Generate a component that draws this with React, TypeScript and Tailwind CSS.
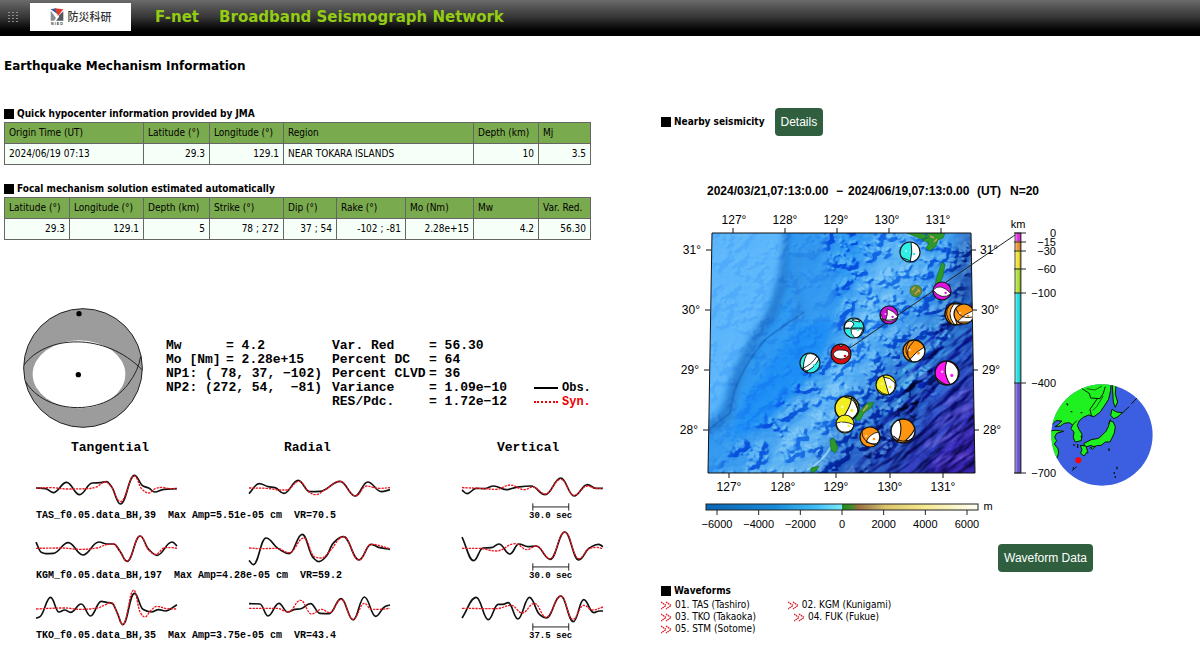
import React from 'react';

type Point = [number, number];

interface Trace {
  obs: Point[];
  syn: Point[];
}

interface Station {
  caption: string;
  span: string;
  traces: Trace[];
}

// Each trace runs over 424 units, three units to a pixel.
const stations: Station[] = [
  {
    caption: 'TAS_f0.05.data_BH,39  Max Amp=5.51e-05 cm  VR=70.5',
    span: '30.0 sec',
    traces: [
      {
        obs: [[0, 86], [29, 88], [52, 100], [92, 69], [131, 106], [169, 71], [194, 70], [212, 67], [226, 80], [254, 134], [296, 48], [322, 80], [339, 86], [357, 98], [384, 90], [424, 88]],
        syn: [[0, 87], [44, 85], [94, 89], [154, 88], [179, 84], [209, 68], [226, 82], [254, 127], [296, 50], [319, 90], [339, 101], [359, 88], [379, 84], [404, 88], [424, 88]],
      },
      {
        obs: [[0, 103], [31, 73], [58, 82], [78, 85], [105, 102], [148, 63], [183, 97], [213, 96], [274, 66], [319, 110], [357, 68], [398, 97], [424, 91]],
        syn: [[0, 86], [53, 87], [93, 92], [113, 92], [150, 66], [183, 100], [200, 106], [228, 92], [274, 66], [321, 110], [353, 80], [373, 84], [393, 87], [424, 85]],
      },
      {
        obs: [[0, 92], [15, 103], [43, 87], [68, 88], [95, 80], [133, 91], [163, 84], [208, 80], [250, 106], [297, 56], [337, 110], [377, 76], [403, 87], [424, 87]],
        syn: [[0, 85], [53, 87], [103, 90], [145, 77], [188, 91], [213, 83], [250, 104], [297, 60], [337, 108], [377, 80], [403, 87], [424, 87]],
      },
    ],
  },
  {
    caption: 'KGM_f0.05.data_BH,197  Max Amp=4.28e-05 cm  VR=59.2',
    span: '30.0 sec',
    traces: [
      {
        obs: [[0, 68], [16, 99], [29, 103], [52, 102], [97, 70], [141, 107], [189, 68], [214, 74], [234, 74], [252, 95], [274, 126], [313, 50], [339, 90], [364, 108], [409, 68], [424, 80]],
        syn: [[0, 87], [74, 86], [134, 90], [184, 86], [212, 76], [232, 74], [252, 95], [274, 125], [313, 50], [339, 92], [359, 105], [389, 85], [409, 85], [424, 87]],
      },
      {
        obs: [[0, 123], [13, 136], [51, 56], [88, 88], [121, 103], [160, 45], [193, 115], [210, 127], [233, 110], [253, 72], [284, 52], [331, 122], [367, 75], [393, 85], [424, 90]],
        syn: [[0, 86], [33, 88], [83, 87], [121, 100], [165, 56], [198, 113], [218, 116], [243, 95], [284, 52], [331, 122], [367, 75], [424, 88]],
      },
      {
        obs: [[0, 53], [35, 124], [63, 86], [88, 85], [111, 74], [144, 104], [171, 74], [198, 82], [223, 80], [265, 120], [309, 38], [351, 122], [383, 86], [410, 75], [424, 82]],
        syn: [[0, 87], [48, 87], [103, 95], [160, 73], [196, 91], [223, 80], [265, 118], [309, 38], [351, 118], [383, 88], [403, 84], [424, 88]],
      },
    ],
  },
  {
    caption: 'TKO_f0.05.data_BH,35  Max Amp=3.75e-05 cm  VR=43.4',
    span: '37.5 sec',
    traces: [
      {
        obs: [[0, 117], [12, 112], [44, 54], [69, 98], [86, 92], [104, 99], [136, 74], [164, 110], [196, 66], [212, 69], [229, 72], [244, 100], [261, 136], [296, 42], [322, 90], [347, 98], [369, 91], [389, 95], [424, 76]],
        syn: [[0, 89], [84, 86], [134, 90], [184, 86], [209, 76], [226, 70], [242, 95], [261, 136], [294, 32], [314, 100], [328, 113], [344, 95], [364, 81], [394, 88], [424, 89]],
      },
      {
        obs: [[0, 73], [33, 74], [57, 110], [90, 72], [116, 98], [138, 90], [153, 89], [185, 73], [213, 102], [241, 103], [277, 58], [313, 122], [347, 53], [381, 111], [408, 82], [424, 77]],
        syn: [[0, 87], [83, 87], [118, 98], [155, 63], [188, 104], [218, 90], [243, 100], [277, 60], [313, 120], [347, 72], [368, 90], [388, 90], [424, 87]],
      },
      {
        obs: [[0, 116], [43, 54], [79, 121], [109, 75], [123, 75], [139, 70], [168, 119], [203, 54], [233, 105], [253, 116], [297, 50], [335, 127], [366, 61], [396, 100], [413, 95], [424, 95]],
        syn: [[0, 87], [103, 88], [148, 78], [181, 101], [218, 72], [253, 114], [297, 50], [333, 120], [366, 78], [393, 92], [424, 83]],
      },
    ],
  },
];

// Monotone cubic through the samples, so peaks stay where they are
const smoothPath = (pts: Point[]) => {
  const secants = pts.slice(1).map((p, i) => (p[1] - pts[i][1]) / (p[0] - pts[i][0]));
  const slopes = pts.map((_, i) => {
    if (i === 0) return secants[0];
    if (i === pts.length - 1) return secants[i - 1];
    const a = secants[i - 1];
    const b = secants[i];
    return a * b <= 0 ? 0 : (2 * a * b) / (a + b);
  });
  let d = `M${pts[0][0]} ${pts[0][1]}`;
  for (let i = 1; i < pts.length; i++) {
    const [x0, y0] = pts[i - 1];
    const [x1, y1] = pts[i];
    // long handles keep the crests round
    const h = (x1 - x0) * 0.42;
    d += `C${x0 + h} ${y0 + slopes[i - 1] * h} ${x1 - h} ${y1 - slopes[i] * h} ${x1} ${y1}`;
  }
  return d;
};

const Header: React.FC = () => (
  <header className="h-9 flex items-center bg-gradient-to-b from-[#6b6b6b] via-[#333333] to-black">
    <svg className="w-3 h-4 ml-2 shrink-0" viewBox="0 0 12 16" fill="#8c8c8c">
      {[2, 5, 8, 11].map((y) =>
        [0, 4, 8].map((x) => <rect key={`${x}-${y}`} x={x} y={y} width="2" height="1" />)
      )}
    </svg>
    <a href="#nied" className="ml-[10px] -mt-[2px] w-[101px] h-7 bg-white flex items-center justify-center gap-1 shrink-0">
      <svg className="w-[14px] h-[18px]" viewBox="0 0 42 54">
        <path d="M2 4 L18 1 L22 18 Z" fill="#2a5fa8" />
        <path d="M14 1 L40 4 L24 24 Z" fill="#e2382c" />
        <path d="M2 8 L18 30 L12 38 L2 38 Z" fill="#8a8f94" />
        <path d="M40 10 L40 38 L18 38 Q30 26 27 22 Z" fill="#55595d" />
        <text x="21" y="52" textAnchor="middle" fontSize="11" fontWeight="bold" fill="#333" className="font-['Liberation_Sans',sans-serif]">N I E D</text>
      </svg>
      <span className="font-['Liberation_Sans','Noto_Sans_CJK_JP',sans-serif] text-[11px] leading-4 font-medium text-[#333333] whitespace-nowrap">防災科研</span>
    </a>
    <h1 className="ml-6 -mt-[2px] flex gap-5 font-['DejaVu_Sans',sans-serif] text-[15px] leading-6 font-bold text-[#93cc12] whitespace-nowrap">
      <span>F-net</span>
      <span>Broadband Seismograph Network</span>
    </h1>
  </header>
);

const SectionTitle: React.FC<{ children: React.ReactNode }> = ({ children }) => (
  <h3 className="flex items-center gap-[3px] text-[10px] leading-4 font-bold whitespace-nowrap">
    <span className="w-[10px] h-[10px] bg-black" />
    {children}
  </h3>
);

interface Column {
  label: string;
  value: string;
  width: string;
  left?: boolean;
}

const hypocenter: Column[] = [
  { label: 'Origin Time (UT)', value: '2024/06/19 07:13', width: 'w-[139px]', left: true },
  { label: 'Latitude (°)', value: '29.3', width: 'w-[66px]' },
  { label: 'Longitude (°)', value: '129.1', width: 'w-[74px]' },
  { label: 'Region', value: 'NEAR TOKARA ISLANDS', width: 'w-[190px]', left: true },
  { label: 'Depth (km)', value: '10', width: 'w-[65px]' },
  { label: 'Mj', value: '3.5', width: 'w-[52px]' },
];

const mechanism: Column[] = [
  { label: 'Latitude (°)', value: '29.3', width: 'w-[65px]' },
  { label: 'Longitude (°)', value: '129.1', width: 'w-[74px]' },
  { label: 'Depth (km)', value: '5', width: 'w-[66px]' },
  { label: 'Strike (°)', value: '78 ; 272', width: 'w-[74px]' },
  { label: 'Dip (°)', value: '37 ; 54', width: 'w-[53px]' },
  { label: 'Rake (°)', value: '-102 ; -81', width: 'w-[69px]' },
  { label: 'Mo (Nm)', value: '2.28e+15', width: 'w-[68px]' },
  { label: 'Mw', value: '4.2', width: 'w-[65px]' },
  { label: 'Var. Red.', value: '56.30', width: 'w-[52px]' },
];

const DataTable: React.FC<{ columns: Column[] }> = ({ columns }) => (
  <table className="w-[587px] table-fixed border-collapse text-[10px] leading-4 whitespace-nowrap">
    <thead>
      <tr className="h-[21px] bg-[#7aaa4e]">
        {columns.map((c) => (
          <th key={c.label} className={`${c.width} border border-[#666666] px-1 font-normal text-left`}>{c.label}</th>
        ))}
      </tr>
    </thead>
    <tbody>
      <tr className="h-[21px] bg-[#f7fff9]">
        {columns.map((c) => (
          <td key={c.label} className={`border border-[#666666] px-1 ${c.left ? 'text-left' : 'text-right'}`}>{c.value}</td>
        ))}
      </tr>
    </tbody>
  </table>
);

const FocalSphere: React.FC = () => (
  <svg className="w-[122px] h-[122px] shrink-0" viewBox="0 0 366 366" fill="none" stroke="#222" strokeWidth="3">
    <circle cx="183" cy="183" r="178" fill="#9c9c9c" />
    <ellipse cx="171" cy="202" rx="139" ry="102" fill="#fff" stroke="none" />
    <path d="M6 174 C72 84 248 74 361 189" />
    <path d="M11 224 C66 318 240 334 318 232 Q350 190 356 148" />
    <circle cx="171" cy="20" r="8" fill="#000" stroke="none" />
    <circle cx="169" cy="203" r="8" fill="#000" stroke="none" />
  </svg>
);

const Solution: React.FC = () => (
  <div className="flex items-start ml-[22px]">
    <FocalSphere />
    <div className="flex items-start mt-8 ml-[22px] font-['Liberation_Mono',monospace] font-bold text-[13px] leading-[14px] whitespace-pre">
      <div className="w-[166px]">
        <div className="grid grid-cols-[60px_1fr]">
          <span>Mw</span>
          <span>= 4.2</span>
          <span>Mo [Nm]</span>
          <span>= 2.28e+15</span>
        </div>
        <p>{'NP1: ( 78, 37, −102)'}</p>
        <p>{'NP2: (272, 54,  −81)'}</p>
      </div>
      <div className="grid grid-cols-[97px_1fr] w-[202px]">
        <span>Var. Red</span>
        <span>= 56.30</span>
        <span>Percent DC</span>
        <span>= 64</span>
        <span>Percent CLVD</span>
        <span>= 36</span>
        <span>Variance</span>
        <span>= 1.09e−10</span>
        <span>RES/Pdc.</span>
        <span>= 1.72e−12</span>
      </div>
      <ul className="self-end text-[12px]">
        <li className="flex items-center gap-1">
          <span className="w-6 border-t-2 border-black" />
          Obs.
        </li>
        <li className="flex items-center gap-1 text-[#f00000]">
          <span className="w-6 border-t-2 border-dotted border-[#f00000]" />
          Syn.
        </li>
      </ul>
    </div>
  </div>
);

const TracePlot: React.FC<{ trace: Trace; scale?: boolean }> = ({ trace, scale }) => (
  <svg className="w-[141px] h-12 overflow-visible" viewBox="0 8 424 144" fill="none">
    <path d={smoothPath(trace.obs)} stroke="#111" strokeWidth="5" />
    <path d={smoothPath(trace.syn)} stroke="#f0141e" strokeWidth="4" strokeDasharray="7 3" />
    {scale && <path d="M213 143H321M213 132V154M321 132V154" stroke="#222" strokeWidth="3" />}
  </svg>
);

const WaveformFit: React.FC = () => (
  <div className="ml-9 max-w-[567px] font-['Liberation_Mono',monospace] font-bold text-[10px] leading-3 whitespace-pre">
    <div className="grid grid-cols-[1fr_1fr_141px] text-[13px] leading-4">
      <span className="pl-[35px]">Tangential</span>
      <span className="pl-[35px]">Radial</span>
      <span className="pl-[35px]">Vertical</span>
    </div>
    <div className="mt-[6px]">
      {stations.map((s) => (
        <div key={s.caption} className="grid grid-cols-[1fr_1fr_141px]">
          {s.traces.map((t, i) => (
            <TracePlot key={i} trace={t} scale={i === 2} />
          ))}
          <p className="col-span-2">{s.caption}</p>
          <p className="pl-[67px] text-[9px]">{s.span}</p>
        </div>
      ))}
    </div>
  </div>
);

interface Event {
  x: number;
  y: number;
  r: number;
  color: string;
  white: string;
  line?: string;
}

// Shapes are drawn in a circle of radius 10
const events: Event[] = [
  { x: 910, y: 252, r: 10, color: '#2ff0e8', white: 'M1 -11 Q3 0 0 11 L12 11 L12 -11Z', line: 'M-9 5 Q0 9 3 10' },
  { x: 942, y: 291, r: 9, color: '#e010e0', white: 'M-10 -1 Q-2 -10 10 3 Q0 11 -10 -1Z' },
  { x: 889, y: 315, r: 9, color: '#d010d8', white: 'M-9 -1 Q-6 8 -5 8 L-10 4Z M-2 -7 Q6 -4 10 2 Q4 9 -4 6 Q-1 0 -2 -7Z', line: 'M-9 4 Q0 8 9 3' },
  { x: 956, y: 314, r: 11, color: '#ff9410', white: 'M-2 -9 Q-9 0 -2 9 L1 10 Q-3 0 4 -9Z', line: 'M-6 -8 Q-12 0 -4 9' },
  { x: 964, y: 314, r: 10, color: '#ff9410', white: 'M-7 8 Q0 0 10 -4 L11 8Z', line: 'M-8 -5 Q-4 6 9 3' },
  { x: 914, y: 351, r: 11, color: '#ff9410', white: 'M-5 9 Q2 0 10 -4 L12 12 L-5 12Z', line: 'M-5 -8 Q-11 1 -2 9 M0 -9 Q-10 0 -3 9' },
  { x: 947, y: 373, r: 12, color: '#ff18f0', white: 'M0 -10 Q-4 0 3 10 Q11 6 9 -3 Q6 -9 0 -10Z M-9 4 Q-4 9 1 10 L-9 9Z' },
  { x: 886, y: 385, r: 10, color: '#f2ee20', white: 'M-3 -11 Q0 0 3 10 Q10 6 9 -2 Q4 -8 -3 -8Z', line: 'M-9 4 Q-3 10 3 10' },
  { x: 903, y: 431, r: 12, color: '#ff9410', white: 'M-3 -9 Q0 0 -4 8 L-12 6 L-12 -8Z M2 8 Q9 2 10 -3 L12 10Z', line: 'M-8 4 Q0 12 8 6' },
  { x: 870, y: 437, r: 10, color: '#ff9410', white: 'M-4 5 Q0 -4 9 -5 Q12 8 2 7Z', line: 'M-8 -6 Q-9 5 6 8' },
  { x: 847, y: 408, r: 12, color: '#f2ee20', white: 'M-5 10 Q3 0 4 -9 Q9 -4 9 3 Q5 12 -5 10Z', line: 'M-2 -9 Q6 -9 9 1' },
  { x: 845, y: 424, r: 9, color: '#f2ee20', white: 'M-10 -1 Q0 -4 10 1 Q8 9 0 9 Q-8 9 -10 -1Z' },
  { x: 854, y: 328, r: 10, color: '#2ff0e8', white: 'M-9 -4 Q-4 -10 0 -4 L-3 0 L-10 1Z M-3 1 L9 1 Q6 10 1 10 Q-4 6 -3 1Z M-2 -8 Q4 -11 6 -6 L0 -7Z', line: 'M-10 0 H10' },
  { x: 810, y: 363, r: 10, color: '#2ff0e8', white: 'M-6 9 Q4 6 9 -4 Q4 -11 -3 -9 Q-8 0 -6 9Z', line: 'M-9 6 Q2 2 7 -7 M-8 5 L-2 9' },
  { x: 841, y: 354, r: 10, color: '#d80c10', white: 'M-8 0 Q-5 -5 1 -4 Q8 -4 8 1 Q4 6 0 5 Q-6 5 -8 0Z M-2 -9 L2 -9 L0 -7Z' },
];

const Terrain: React.FC = () => (
  <>
    <defs>
      <clipPath id="map-frame">
        <path d="M712 233H971L975 473H708Z" />
      </clipPath>
      <linearGradient id="sea" gradientUnits="userSpaceOnUse" x1="800" y1="300" x2="965" y2="445">
        <stop offset="0" stopColor="#2b97f2" />
        <stop offset="0.42" stopColor="#439fee" />
        <stop offset="0.6" stopColor="#2a74d2" />
        <stop offset="0.76" stopColor="#2346b4" />
        <stop offset="1" stopColor="#2c1c98" />
      </linearGradient>
      <filter id="soft" x="-20%" y="-20%" width="140%" height="140%">
        <feGaussianBlur stdDeviation="3" />
      </filter>
      <filter id="softer" x="-30%" y="-30%" width="160%" height="160%">
        <feGaussianBlur stdDeviation="8" />
      </filter>
      <filter id="seamounts" x="0" y="0" width="100%" height="100%" colorInterpolationFilters="sRGB">
        <feTurbulence type="fractalNoise" baseFrequency="0.06 0.07" numOctaves="3" seed="7" />
        <feColorMatrix values="0 0 0 0 0  0 0 0 0 0  0 0 0 0 0  1 0 0 0 0" />
        <feComponentTransfer>
          <feFuncA type="table" tableValues="0 0.01 0.02 0.04 0.06 0.09 0.4 0.7 0.8 0.9 1" />
        </feComponentTransfer>
        <feDiffuseLighting surfaceScale="7" diffuseConstant="0.77" lightingColor="#fff">
          <feDistantLight azimuth="225" elevation="42" />
        </feDiffuseLighting>
      </filter>
      <filter id="ridges" x="0" y="0" width="100%" height="100%" colorInterpolationFilters="sRGB">
        <feTurbulence type="fractalNoise" baseFrequency="0.025 0.085" numOctaves="3" seed="12" />
        <feColorMatrix values="0 0 0 0 0  0 0 0 0 0  0 0 0 0 0  1 0 0 0 0" />
        <feDiffuseLighting surfaceScale="8" diffuseConstant="0.8" lightingColor="#fff">
          <feDistantLight azimuth="235" elevation="42" />
        </feDiffuseLighting>
      </filter>
      <mask id="arc-mask" maskUnits="userSpaceOnUse" x="700" y="225" width="285" height="255">
        <path d="M820 225L985 225L930 400L870 480L715 480L730 450L765 420L795 385L835 345L838 300Z" fill="#fff" filter="url(#soft)" />
      </mask>
      <mask id="trench-mask" maskUnits="userSpaceOnUse" x="700" y="225" width="285" height="255">
        <path d="M985 290L940 320L900 370L860 480L985 480Z" fill="#fff" filter="url(#softer)" />
      </mask>
    </defs>
    <g clipPath="url(#map-frame)" className="isolate">
      <rect x="700" y="225" width="285" height="255" fill="url(#sea)" />
      <path d="M880 225L935 225L925 270L880 330L850 400L810 480L750 480L820 390L860 290Z" fill="#68bcf6" opacity="0.75" filter="url(#softer)" />
      <path d="M962 225L985 225L985 330L945 340L952 290Z" fill="#1c4ca8" opacity="0.7" filter="url(#softer)" />
      <path d="M800 325L835 320L815 370L765 425L730 440L745 395Z" fill="#1a8ef5" filter="url(#soft)" />
      <path d="M795 225L840 225L830 310L800 325L785 300Z" fill="#3298f0" filter="url(#soft)" />
      <path d="M782 230Q786 270 772 312Q744 348 732 390L727 414L705 432" stroke="#2680d6" strokeWidth="12" fill="none" filter="url(#soft)" />
      <path d="M700 225H784Q783 270 766 312Q740 348 727 388Q722 412 700 430Z" fill="#5cb6fb" filter="url(#soft)" />
      <path d="M804 312Q780 328 766 339Q745 362 734 392L730 413L708 430" stroke="#1a64b8" strokeWidth="2" fill="none" opacity="0.6" />
      <path d="M800 250Q793 290 802 315M790 270Q780 300 774 322M820 245L808 262M803 312L792 322" stroke="#2676c4" strokeWidth="3" fill="none" opacity="0.5" filter="url(#soft)" />
      <path d="M877 480L915 385M890 480L925 405M860 480L880 445M915 480L945 430" stroke="#123c98" strokeWidth="7" fill="none" opacity="0.5" filter="url(#soft)" />
      <path d="M925 445L970 430M930 462L972 455M935 425L972 405M945 405L970 390" stroke="#7a5be0" strokeWidth="4" fill="none" opacity="0.7" filter="url(#soft)" />
      <rect x="700" y="225" width="285" height="255" filter="url(#seamounts)" className="mix-blend-soft-light" opacity="0.2" />
      <g mask="url(#arc-mask)" className="mix-blend-soft-light">
        <rect x="700" y="225" width="285" height="255" filter="url(#seamounts)" />
      </g>
      <g mask="url(#trench-mask)" className="mix-blend-overlay" opacity="0.8">
        <rect x="600" y="120" width="500" height="500" filter="url(#ridges)" transform="rotate(-38 840 350)" />
      </g>
      <path d="M807 470Q822 462 831 447" stroke="#9adcf8" strokeWidth="2" fill="none" opacity="0.8" />
      <g fill="#2c9a2a" stroke="#176018" strokeWidth="0.5">
        <path d="M907 233L922 233L929 237L921 239L914 236Z" />
        <path d="M926 233L945 233L943 238L938 240L936 246L930 251L926 248L929 243L922 240L930 237Z" />
        <path d="M942 262L945 265L943 276L939 286L935 285L937 276Z" />
        <path d="M867 403L874 402L871 408L864 413L860 420L855 420L858 413Z" />
        <path d="M830 440L834 438L838 448L835 453L831 450Z" />
        <path d="M811 468L819 466L816 471L811 473Z" />
        <circle cx="916" cy="291" r="6" fill="#5d8a32" />
      </g>
      <path d="M912 290l3-3M915 294l4-4M918 289l2 3M930 236l4 2M934 242l3-3M868 405l-5 6" stroke="#d89a58" strokeWidth="1.4" />
    </g>
    <path d="M712 233H971L975 473H708Z" fill="none" stroke="#111" strokeWidth="1" />
  </>
);

const depths = [
  { y: 233, h: 8, color: '#e818e8' },
  { y: 241, h: 9, color: '#f08c20' },
  { y: 250, h: 18, color: '#f0e020' },
  { y: 268, h: 25, color: '#a8e020' },
  { y: 293, h: 90, color: '#10e0e0' },
  { y: 383, h: 90, color: '#5f45d8' },
];

const depthLabels = [
  { y: 233, text: '0' },
  { y: 242, text: '−15' },
  { y: 251, text: '−30' },
  { y: 269, text: '−60' },
  { y: 293, text: '−100' },
  { y: 383, text: '−400' },
  { y: 473, text: '−700' },
];

const Globe: React.FC = () => (
  <g transform="translate(690 370) scale(0.3333)">
    <clipPath id="globe">
      <circle cx="1236" cy="195" r="152" />
    </clipPath>
    <g clipPath="url(#globe)" strokeLinejoin="round">
      <rect x="1080" y="40" width="312" height="312" fill="#3b5fe0" />
      <g fill="#1ff01f" stroke="#061806" strokeWidth="3">
        <path d="M1075 175L1088 162L1098 152L1116 153L1106 163L1095 170L1112 168L1122 160L1138 158L1148 165L1143 176L1152 186L1150 203L1156 216L1174 212L1176 192L1167 178L1162 166L1168 152L1180 142L1196 135L1212 140L1230 127L1245 105L1256 88L1262 62L1264 30L1120 30L1070 110Z" />
        <path d="M1075 183L1098 181L1121 184L1100 190L1094 202L1100 212L1093 222L1104 236L1106 250L1100 266L1080 280Z" />
        <path d="M1267 44L1278 46L1276 72L1283 96L1276 112L1270 96Z" />
        <path d="M1266 118L1280 126L1297 128L1284 140L1272 146L1262 136Z" />
        <path d="M1260 152L1270 156L1276 170L1273 190L1265 206L1260 216L1246 216L1234 226L1220 227L1212 232L1204 226L1184 232L1182 220L1204 209L1226 205L1236 196L1248 184L1256 168Z" />
        <path d="M1200 233L1216 228L1208 238Z" />
        <path d="M1171 226L1188 228L1193 244L1182 258L1172 250L1176 238Z" />
      </g>
      <path d="M1175 55L1198 70L1202 84L1230 86L1240 70L1246 50M1205 140L1200 118L1222 86M1148 165L1160 152M1297 130L1308 118L1318 110M1324 102L1341 84M1160 290L1146 302M1256 162L1262 148" fill="none" stroke="#061806" strokeWidth="3" />
      <path d="M1190 56L1215 60L1236 48M1240 78L1220 110L1208 122" fill="none" stroke="#061806" strokeWidth="2" />
      <path d="M1130 100l4 6M1142 125h5M1172 128h5M1257 235v8M1281 290v8M1273 306v6M1276 318v6M1163 222v12M1172 200h5M1152 222v6M1192 248h3M1148 294h4" fill="none" stroke="#061806" strokeWidth="4" />
      <circle cx="1165" cy="271" r="9" fill="#f00" />
    </g>
  </g>
);

const SeismicityMap: React.FC = () => (
  <svg
    className="w-[480px] h-[355px] font-['Liberation_Sans',sans-serif]"
    viewBox="675 180 480 355"
    fontSize="12"
    role="img"
    aria-label="Nearby seismicity map"
  >
    <defs>
      <linearGradient id="round">
        <stop offset="0" stopColor="#fff" stopOpacity="0.6" />
        <stop offset="0.5" stopColor="#fff" stopOpacity="0" />
        <stop offset="1" stopColor="#000" stopOpacity="0.6" />
      </linearGradient>
      <linearGradient id="height">
        <stop offset="0" stopColor="#0a66b4" />
        <stop offset="0.25" stopColor="#1688d8" />
        <stop offset="0.4" stopColor="#3cbcf4" />
        <stop offset="0.5" stopColor="#7ce8fc" />
        <stop offset="0.5" stopColor="#1c8c1c" />
        <stop offset="0.54" stopColor="#4c8a30" />
        <stop offset="0.56" stopColor="#a07040" />
        <stop offset="0.62" stopColor="#b8a060" />
        <stop offset="0.66" stopColor="#dcc468" />
        <stop offset="0.8" stopColor="#f4e890" />
        <stop offset="1" stopColor="#fffff4" />
      </linearGradient>
    </defs>

    <g fontWeight="bold">
      <text x="707" y="195">2024/03/21,07:13:0.00</text>
      <text x="836" y="195">−</text>
      <text x="848" y="195">2024/06/19,07:13:0.00</text>
      <text x="977" y="195">(UT)</text>
      <text x="1039" y="195" textAnchor="end">N=20</text>
    </g>

    <Terrain />

    <g textAnchor="middle">
      {[127, 128, 129, 130, 131].map((lon, i) => (
        <React.Fragment key={lon}>
          <text x={734 + i * 51} y="224">{lon}°</text>
          <text x={729 + Math.round(i * 53.5)} y="491">{lon}°</text>
          <path d={`M${733 + i * 52} 233v-5M${729 + Math.round(i * 53.5)} 473v5`} stroke="#111" />
        </React.Fragment>
      ))}
    </g>
    {[31, 30, 29, 28].map((lat, i) => (
      <React.Fragment key={lat}>
        <path d={`M${711 - i} ${250 + i * 60}h-5M${971 + i} ${250 + i * 60}h5`} stroke="#111" />
        <text x={701 - i} y={254 + i * 60} textAnchor="end">{lat}°</text>
        <text x={980 + i} y={254 + i * 60}>{lat}°</text>
      </React.Fragment>
    ))}

    <path d="M841 354L1015 235" stroke="#222" strokeWidth="1" />
    <clipPath id="ball">
      <circle r="10" />
    </clipPath>
    <g clipPath="url(#map-frame)">
      {events.map((e) => (
        <g key={`${e.x}-${e.y}`} transform={`translate(${e.x} ${e.y}) scale(${e.r / 10})`}>
          <circle r="10" fill={e.color} />
          <g clipPath="url(#ball)" stroke="#111" strokeWidth="0.9">
            <path d={e.white} fill="#fff" />
            {e.line && <path d={e.line} fill="none" />}
          </g>
          <circle r="10" fill="none" stroke="#111" strokeWidth="1.2" />
          <circle cx="-4" cy="-1" r="1.1" fill="#fff" opacity="0.7" />
          <circle cx="4" cy="2" r="1.3" fill={e.color} />
        </g>
      ))}
    </g>

    <g fontSize="11">
      <text x="1018" y="228" textAnchor="middle">km</text>
      {depths.map((d) => (
        <rect key={d.y} x="1015" y={d.y} width="6" height={d.h} fill={d.color} />
      ))}
      <rect x="1015" y="233" width="6" height="240" fill="url(#round)" stroke="#222" strokeWidth="0.8" />
      {depthLabels.map((d) => (
        <React.Fragment key={d.text}>
          <path d={`M1014 ${d.y}h12`} stroke="#222" />
          <text x="1056" y={d.y + 4} textAnchor="end">{d.text}</text>
        </React.Fragment>
      ))}
    </g>

    <g fontSize="11" textAnchor="middle">
      <rect x="706" y="504" width="272" height="6" fill="url(#height)" stroke="#222" strokeWidth="1" />
      {[-6000, -4000, -2000, 0, 2000, 4000, 6000].map((m) => {
        const x = 842 + (m / 6000) * 125;
        return (
          <React.Fragment key={m}>
            <path d={`M${x} 510v5`} stroke="#222" />
            <text x={x} y="528">{String(m).replace('-', '−')}</text>
          </React.Fragment>
        );
      })}
      <text x="988" y="510">m</text>
    </g>

    <Globe />
  </svg>
);

const StationLink: React.FC<{ label: string }> = ({ label }) => (
  <a href="#waveform" className="flex items-center gap-[3px]">
    <svg className="w-[11px] h-[9px]" viewBox="0 0 11 9" fill="none" stroke="#d8202c" strokeWidth="1.4" strokeDasharray="1.6 0.6">
      <path d="M0 1L5 4.5L0 8M5 1L10 4.5L5 8" />
    </svg>
    {label}
  </a>
);

const GreenButton: React.FC<{ children: React.ReactNode }> = ({ children }) => (
  <button
    type="button"
    className="h-7 px-[6px] rounded bg-[#2f5f3e] text-white font-['Liberation_Sans',sans-serif] text-[12px] leading-4 whitespace-nowrap"
  >
    {children}
  </button>
);

const App: React.FC = () => (
  <div className="bg-white text-black font-['DejaVu_Sans_Condensed','DejaVu_Sans',sans-serif]">
    <Header />
    <main className="grid grid-cols-[55%_45%]">
      <section className="pl-1">
        <h2 className="mt-5 font-['DejaVu_Sans',sans-serif] text-[12px] leading-5 font-bold">Earthquake Mechanism Information</h2>
        <div className="mt-[30px]">
          <SectionTitle>Quick hypocenter information provided by JMA</SectionTitle>
          <DataTable columns={hypocenter} />
        </div>
        <div className="mt-4">
          <SectionTitle>Focal mechanism solution estimated automatically</SectionTitle>
          <DataTable columns={mechanism} />
        </div>
        <div className="-ml-1 mt-[67px]">
          <Solution />
          <div className="mt-[11px]">
            <WaveformFit />
          </div>
        </div>
      </section>

      <section className="pl-px">
        <div className="mt-[72px] flex items-center gap-[10px]">
          <SectionTitle>Nearby seismicity</SectionTitle>
          <GreenButton>Details</GreenButton>
        </div>
        <div className="mt-11 ml-[14px]">
          <SeismicityMap />
        </div>
        <div className="mt-[9px] ml-[337px]">
          <GreenButton>Waveform Data</GreenButton>
        </div>
        <div className="mt-[11px] text-[10px] leading-3">
          <SectionTitle>Waveforms</SectionTitle>
          <div className="flex gap-[38px]">
            <StationLink label="01. TAS (Tashiro)" />
            <StationLink label="02. KGM (Kunigami)" />
          </div>
          <div className="flex gap-[38px]">
            <StationLink label="03. TKO (Takaoka)" />
            <StationLink label="04. FUK (Fukue)" />
          </div>
          <div className="flex">
            <StationLink label="05. STM (Sotome)" />
          </div>
        </div>
      </section>
    </main>
  </div>
);

export default App;
